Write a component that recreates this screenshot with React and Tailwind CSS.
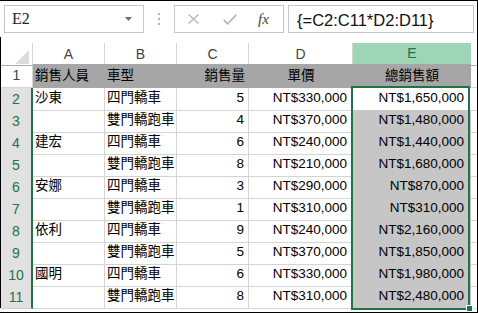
const rows = [
  ['沙東', '四門轎車', '5', 'NT$330,000', 'NT$1,650,000'],
  ['', '雙門轎跑車', '4', 'NT$370,000', 'NT$1,480,000'],
  ['建宏', '四門轎車', '6', 'NT$240,000', 'NT$1,440,000'],
  ['', '雙門轎跑車', '8', 'NT$210,000', 'NT$1,680,000'],
  ['安娜', '四門轎車', '3', 'NT$290,000', 'NT$870,000'],
  ['', '雙門轎跑車', '1', 'NT$310,000', 'NT$310,000'],
  ['依利', '四門轎車', '9', 'NT$240,000', 'NT$2,160,000'],
  ['', '雙門轎跑車', '5', 'NT$370,000', 'NT$1,850,000'],
  ['國明', '四門轎車', '6', 'NT$330,000', 'NT$1,980,000'],
  ['', '雙門轎跑車', '8', 'NT$310,000', 'NT$2,480,000'],
];

const cols = 'grid grid-cols-[32px_72px_72px_72px_104px_118px_1fr]';

const FormulaBar = () => (
  <div className="flex h-[36px] pt-[4px]">
    <div className="ml-[4px] flex h-[28px] w-[140px] items-center border border-[#c6c6c6] pl-[7px]">
      <span className="font-['Liberation_Serif',serif] text-[16px] text-[#222]">E2</span>
      <svg className="ml-auto mr-[11px]" width="7" height="4" viewBox="0 0 7 4">
        <polygon points="0,0 7,0 3.5,4" fill="#6f6f6f" />
      </svg>
    </div>
    <div className="flex w-[30px] flex-col items-center gap-[3px] pt-[8px]">
      <div className="h-[2px] w-[2px] bg-[#b4b4b4]" />
      <div className="h-[2px] w-[2px] bg-[#b4b4b4]" />
      <div className="h-[2px] w-[2px] bg-[#b4b4b4]" />
    </div>
    <div className="flex h-[28px] w-[110px] items-center border border-[#c6c6c6]">
      <svg className="ml-[13px]" width="11" height="10" viewBox="0 0 11 10">
        <path d="M0.5 0.5 L10.5 9.5 M10.5 0.5 L0.5 9.5" stroke="#b8b8b8" strokeWidth="1.4" fill="none" />
      </svg>
      <svg className="ml-[24px]" width="14" height="11" viewBox="0 0 14 11">
        <path d="M0.8 6 L4.6 9.8 L13.2 0.8" stroke="#b8b8b8" strokeWidth="1.8" fill="none" />
      </svg>
      <span className="ml-[21px] font-['Liberation_Serif',serif] text-[15px] italic text-[#444]">fx</span>
    </div>
    <div className="ml-[4px] mr-[3px] flex h-[28px] flex-1 items-center border border-[#c6c6c6] pl-[8px] pt-[2px]">
      <span className="text-[16.5px] text-[#111]">{'{=C2:C11*D2:D11}'}</span>
    </div>
  </div>
);

const HeaderRow = () => (
  <div className={`${cols} h-[21px] text-[14px] text-[#444]`}>
    <div className="relative border-r border-b border-r-[#d4d4d4] border-b-[#ababab]">
      <svg className="absolute right-[3px] bottom-[1px]" width="14" height="14" viewBox="0 0 14 14">
        <polygon points="14,0 14,14 0,14" fill="#dcdcdc" />
      </svg>
    </div>
    {['A', 'B', 'C', 'D'].map((c) => (
      <div key={c} className="flex items-center justify-center border-r border-b border-r-[#d4d4d4] border-b-[#ababab]">
        {c}
      </div>
    ))}
    <div className="flex items-center justify-center border-b-2 border-[#217346] bg-[#9fd5b7] text-[#217346]">E</div>
    <div className="border-b border-[#ababab]" />
  </div>
);

const TitleRow = () => (
  <div className={`${cols} h-[24px] text-[13.5px] text-black`}>
    <div className="flex items-center justify-center border-r border-b border-[#d4d4d4] text-[14px] text-[#444]">1</div>
    <div className="flex items-center bg-[#a6a6a6] pl-[2px] pt-[1px]">銷售人員</div>
    <div className="flex items-center bg-[#a6a6a6] pl-[2px] pt-[1px]">車型</div>
    <div className="flex items-center justify-end bg-[#a6a6a6] pr-[4px] pt-[1px]">銷售量</div>
    <div className="flex items-center justify-center bg-[#a6a6a6] pt-[1px]">單價</div>
    <div className="flex items-center justify-center bg-[#a6a6a6] pt-[1px]">總銷售額</div>
    <div className="border-b border-[#d4d4d4]" />
  </div>
);

const DataRow = ({ n, row }) => {
  const [name, model, qty, price, total] = row;
  const cell = 'flex items-center border-r border-b border-[#d4d4d4] pb-[2px]';
  return (
    <div className={`${cols} h-[22px] text-[13.5px] text-black`}>
      <div className="flex items-center justify-center border-r-2 border-b border-r-[#217346] border-b-[#cfcfcf] bg-[#e1e1e1] text-[14px] text-[#217346]">
        {n}
      </div>
      <div className={`${cell} pl-[2px]`}>{name}</div>
      <div className={`${cell} pl-[2px]`}>{model}</div>
      <div className={`${cell} justify-end pr-[4px]`}>{qty}</div>
      <div className={`${cell} justify-end pr-[5px]`}>{price}</div>
      <div
        className={
          n === 2
            ? 'flex items-center justify-end border-b border-[#d4d4d4] pb-[2px] pr-[7px]'
            : 'flex items-center justify-end border-b border-[#e4e4e4] bg-[#c6c6c6] pb-[2px] pr-[7px]'
        }
      >
        {total}
      </div>
      <div className="border-b border-[#d4d4d4]" />
    </div>
  );
};

export default function App() {
  return (
    <div className="relative h-[313px] w-[478px] overflow-hidden border-t border-r border-b border-black bg-white font-['Liberation_Sans','Noto_Sans_CJK_TC',sans-serif]">
      <FormulaBar />
      <div className="border-l border-black pt-[6px]">
        <HeaderRow />
        <TitleRow />
        {rows.map((row, i) => (
          <DataRow key={i} n={i + 2} row={row} />
        ))}
      </div>
      {/* selection outline around E2:E11 */}
      <div className="absolute left-[351px] top-[85px] h-[224px] w-[119px] border-2 border-[#217346]" />
      <div className="absolute left-[466px] top-[304px] h-[7px] w-[7px] border border-white bg-[#217346]" />
    </div>
  );
}
